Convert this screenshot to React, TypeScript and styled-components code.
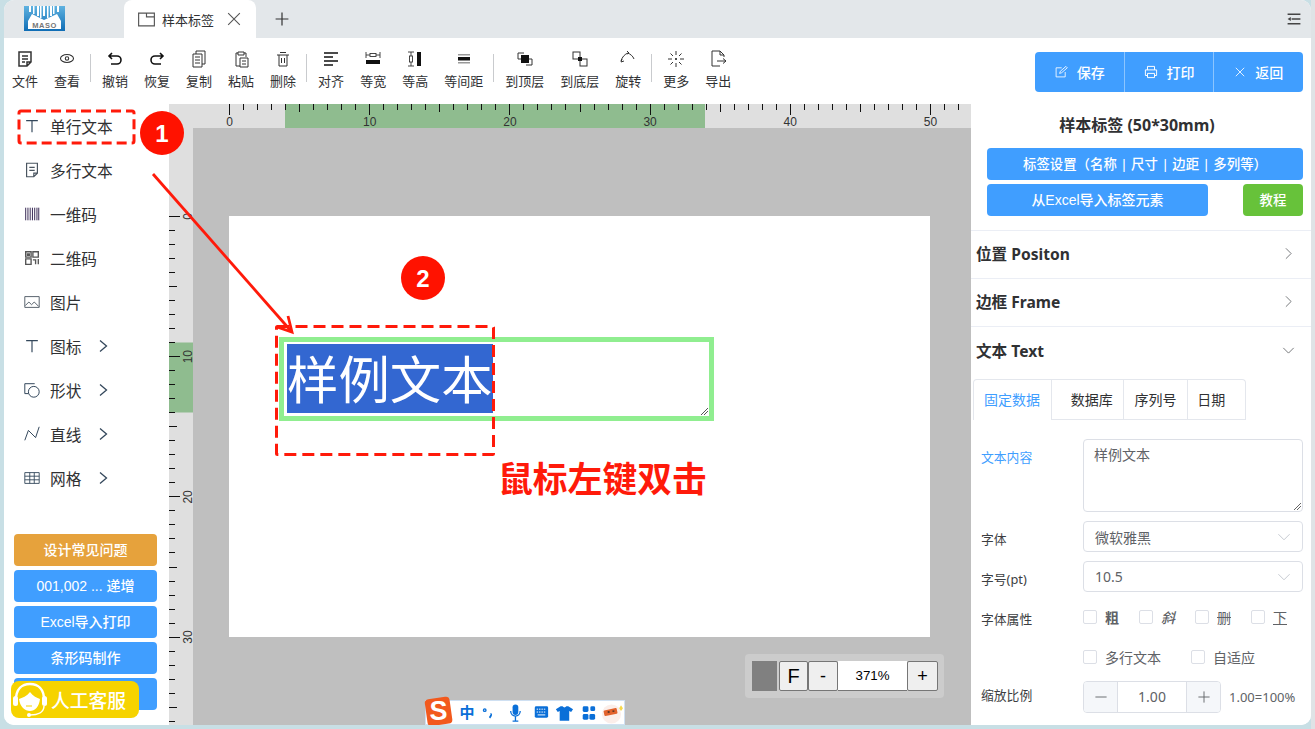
import React from "react";
import styled, { createGlobalStyle } from "styled-components";

const GlobalStyle = createGlobalStyle`
    html, body {
        margin: 0;
        padding: 0;
        overflow: hidden;
    }
    body {
        font-family: "Noto Sans", "Noto Sans CJK SC", sans-serif;
        color: #303133;
    }
    * {
        box-sizing: border-box;
    }
`;

const Page = styled.div`
    position: relative;
    width: 1315px;
    height: 729px;
    padding: 0 4px 4px 4px;
    overflow: hidden;
    background: linear-gradient(90deg, #c8dfe5 1311px, #dfe3e6 1311px);
`;
const Win = styled.div`
    display: flex;
    flex-direction: column;
    width: 1307px;
    height: 725px;
    border-radius: 10px;
    overflow: hidden;
    background: #fff;
`;

/* title bar */
const TabBar = styled.div`
    display: flex;
    align-items: flex-end;
    height: 38px;
    background: #e3e7ea;
    padding-left: 20px;
`;
const LogoBox = styled.div`
    width: 100px;
    height: 38px;
    padding-top: 6px;
`;
const Tab = styled.div`
    display: flex;
    align-items: center;
    width: 132px;
    height: 38px;
    padding-left: 12px;
    background: #fff;
    border-radius: 8px 8px 0 0;
    font-size: 13px;
    color: #303133;
`;
const TabLabel = styled.span`
    margin: 0 11px 0 5px;
`;
const AddTab = styled.div`
    display: flex;
    align-items: center;
    height: 38px;
    margin-left: 18px;
`;
const MenuButton = styled.div`
    display: flex;
    align-items: center;
    height: 38px;
    margin-left: auto;
    padding-right: 9px;
`;

/* toolbar */
const Toolbar = styled.div`
    display: flex;
    align-items: flex-start;
    height: 66px;
    padding-top: 11px;
    background: #fff;
`;
const ToolItem = styled.div`
    display: flex;
    flex-direction: column;
    align-items: center;
    padding: 0 8px;
    font-size: 13px;
    line-height: 18px;
    color: #303133;
    white-space: nowrap;
`;
const ToolIcon = styled.div`
    height: 22px;
    margin-bottom: 1px;
`;
const ToolSep = styled.div`
    width: 1px;
    height: 28px;
    margin: 5px 3px 0 2px;
    background: #c9cbce;
`;
const ButtonGroup = styled.div`
    display: flex;
    width: 268px;
    height: 40px;
    margin: 3px 8px 0 auto;
    border-radius: 4px;
    overflow: hidden;
`;
const GroupButton = styled.div`
    display: flex;
    flex: 1;
    align-items: center;
    justify-content: center;
    gap: 9px;
    background: #409eff;
    color: #fff;
    font-size: 14px;
    font-weight: 500;
    & + & {
        border-left: 1px solid #8cc5ff;
    }
`;

/* main */
const Body = styled.div`
    display: flex;
    height: 621px;
`;
const LeftPanel = styled.div`
    position: relative;
    display: flex;
    flex-direction: column;
    width: 165px;
    padding: 0 0 15px 0;
    background: #fff;
`;
const MenuItem = styled.div`
    display: flex;
    align-items: center;
    height: 44px;
    padding-left: 21px;
    font-size: 15.7px;
    color: #303133;
`;
const MenuIcon = styled.div`
    display: flex;
    justify-content: center;
    width: 18px;
    margin: 0 9px 0 -2px;
`;
const MenuArrow = styled.div`
    display: flex;
    margin-left: 18px;
`;
const SideButtons = styled.div`
    display: flex;
    flex-direction: column;
    gap: 4px;
    width: 143px;
    margin: auto 0 0 10px;
`;
const SideButton = styled.div<{ $bg?: string }>`
    height: 32px;
    line-height: 32px;
    border-radius: 4px;
    text-align: center;
    font-family: "Liberation Sans", "Noto Sans CJK SC", sans-serif;
    font-size: 14px;
    font-weight: 500;
    color: #fff;
    background: ${(p) => p.$bg || "#409eff"};
`;
const Kefu = styled.div`
    position: absolute;
    left: 7px;
    bottom: 7px;
    display: flex;
    align-items: center;
    width: 128px;
    height: 37px;
    border-radius: 8px;
    background: #f6d300;
    color: #fff;
    font-size: 18.8px;
    font-weight: 500;
`;

const Center = styled.div`
    display: flex;
    flex-direction: column;
    width: 802px;
`;
const RulerTop = styled.svg`
    display: block;
    flex: none;
`;
const CenterRow = styled.div`
    display: flex;
    flex: 1;
`;
const RulerLeft = styled.svg`
    display: block;
    flex: none;
`;
const Canvas = styled.div`
    position: relative;
    flex: 1;
    padding: 88px 0 0 36px;
    background: #bfbfbf;
`;
const Label = styled.div`
    position: relative;
    width: 701px;
    height: 421px;
    background: #fff;
`;
const TextBox = styled.div`
    position: absolute;
    left: 50px;
    top: 121px;
    width: 435px;
    height: 84px;
    padding: 2px 3px;
    border: 5px solid #90ee90;
    background: #fff;
`;
const Selected = styled.div`
    width: 206px;
    height: 69px;
    background: #3367d1;
    color: #fff;
    font-size: 51.4px;
    line-height: 71px;
    white-space: nowrap;
`;
const Resize = styled.svg`
    position: absolute;
    right: 0;
    bottom: 0;
`;
const ZoomBar = styled.div`
    position: absolute;
    right: 27px;
    bottom: 27px;
    display: flex;
    align-items: stretch;
    height: 44px;
    padding: 7px 6px 7px 7px;
    border-radius: 4px;
    background: #cccccc;
`;
const Swatch = styled.div`
    width: 25px;
    margin-right: 2px;
    background: #808080;
`;
const ZoomButton = styled.div<{ $w: number; $size: number }>`
    display: flex;
    align-items: center;
    justify-content: center;
    width: ${(p) => p.$w}px;
    border: 1px solid #767676;
    border-radius: 2px;
    background: #efefef;
    font-family: "Liberation Sans", sans-serif;
    font-size: ${(p) => p.$size}px;
    color: #000;
`;
const ZoomValue = styled.div`
    display: flex;
    align-items: center;
    justify-content: center;
    width: 69px;
    border-bottom: 1px solid #767676;
    background: #fff;
    font-family: "Liberation Sans", sans-serif;
    font-size: 13.3px;
    color: #000;
`;
const ImeBar = styled.div`
    position: absolute;
    left: 232px;
    bottom: 0;
    display: flex;
    align-items: center;
    width: 200px;
    height: 25px;
    padding-left: 29px;
    background: #fff;
    border: 1px solid #cfe0f2;
`;
const ImeLogo = styled.svg`
    position: absolute;
    left: -2px;
    top: -6px;
`;
const ImeChar = styled.span`
    width: 25px;
    font-size: 15px;
    font-weight: 700;
    color: #0a6fd8;
    text-align: center;
    line-height: 23px;
`;

/* right panel */
const RightPanel = styled.div`
    width: 340px;
    background: #fff;
    overflow: hidden;
`;
const RightHead = styled.div`
    display: flex;
    flex-direction: column;
    gap: 4px;
    height: 127px;
    padding: 0 8px 0 16px;
    border-bottom: 1px solid #ebeef5;
`;
const Title = styled.div`
    height: 40px;
    margin-right: 16px;
    text-align: center;
    font-size: 16px;
    font-weight: 700;
    line-height: 42px;
    color: #303133;
`;
const WideButton = styled.div<{ $w: number; $bg?: string; $latin?: boolean }>`
    width: ${(p) => p.$w}px;
    height: 32px;
    line-height: 32px;
    border-radius: 4px;
    text-align: center;
    color: #fff;
    font-family: ${(p) => (p.$latin ? '"Liberation Sans", "Noto Sans CJK SC", sans-serif' : "inherit")};
    font-size: ${(p) => (p.$latin ? 14 : 13.4)}px;
    font-weight: 500;
    background: ${(p) => p.$bg || "#409eff"};
`;
const ButtonRow = styled.div`
    display: flex;
    justify-content: space-between;
`;
const Fold = styled.div<{ $line?: boolean }>`
    display: flex;
    align-items: center;
    justify-content: space-between;
    height: 48px;
    padding: 0 16px 2px 5px;
    font-size: 15.6px;
    font-weight: 700;
    color: #303133;
    border-bottom: ${(p) => (p.$line ? "1px solid #ebeef5" : "none")};
`;
const Tabs = styled.div`
    display: flex;
    width: 273px;
    height: 41px;
    margin: 4px 0 0 2px;
    border: 1px solid #e4e7ed;
    border-bottom: none;
    border-radius: 4px 4px 0 0;
`;
const FormTab = styled.div<{ $w: number; $pad: number; $active?: boolean }>`
    width: ${(p) => p.$w}px;
    padding-left: ${(p) => p.$pad}px;
    line-height: 39px;
    font-size: 14px;
    color: ${(p) => (p.$active ? "#409eff" : "#303133")};
    border-bottom: ${(p) => (p.$active ? "none" : "1px solid #e4e7ed")};
    & + & {
        border-left: 1px solid #e4e7ed;
    }
`;
const Form = styled.div`
    display: flex;
    flex-direction: column;
    gap: 9px;
    padding: 19px 8px 0 10px;
`;
const FormRow = styled.div<{ $h: number; $top?: boolean }>`
    display: grid;
    grid-template-columns: 102px 220px;
    align-items: ${(p) => (p.$top ? "start" : "center")};
    height: ${(p) => p.$h}px;
`;
const FormLabel = styled.div<{ $active?: boolean; $off?: number }>`
    font-size: 12.8px;
    margin-top: ${(p) => p.$off || 0}px;
    color: ${(p) => (p.$active ? "#409eff" : "#3c3e42")};
`;
const TextArea = styled.div`
    position: relative;
    height: 73px;
    padding: 4px 10px;
    border: 1px solid #dcdfe6;
    border-radius: 4px;
    font-size: 14px;
    color: #606266;
`;
const Select = styled.div`
    display: flex;
    align-items: center;
    justify-content: space-between;
    height: 31px;
    padding: 0 11px 0 11px;
    border: 1px solid #dcdfe6;
    border-radius: 4px;
    font-size: 14px;
    color: #606266;
`;
const Checks = styled.div`
    display: flex;
`;
const Check = styled.div<{ $w: number }>`
    display: flex;
    align-items: center;
    width: ${(p) => p.$w}px;
    font-size: 14px;
    color: #606266;
`;
const Box = styled.span`
    flex: none;
    width: 14px;
    height: 14px;
    margin-right: 8px;
    border: 1px solid #dcdfe6;
    border-radius: 2px;
    background: #fff;
`;
const BoldText = styled.span`
    font-weight: 700;
`;
const ItalicText = styled.span`
    font-style: italic;
    font-weight: 500;
`;
const StrikeText = styled.span`
    text-decoration: line-through;
`;
const UnderText = styled.span`
    text-decoration: underline;
`;
const StepperRow = styled.div`
    display: flex;
    align-items: center;
    gap: 8px;
`;
const Stepper = styled.div`
    display: flex;
    width: 138px;
    height: 32px;
    border: 1px solid #dcdfe6;
    border-radius: 4px;
    overflow: hidden;
`;
const StepButton = styled.div`
    display: flex;
    align-items: center;
    justify-content: center;
    width: 33px;
    background: #f5f7fa;
`;
const StepValue = styled.div`
    flex: 1;
    border-left: 1px solid #dcdfe6;
    border-right: 1px solid #dcdfe6;
    text-align: center;
    line-height: 30px;
    font-size: 14px;
    color: #606266;
`;
const StepHint = styled.span`
    font-size: 13px;
    color: #606266;
    white-space: nowrap;
`;

/* annotations drawn on top of the screenshot */
const Notes = styled.svg`
    position: absolute;
    left: 0;
    top: 0;
    pointer-events: none;
`;
const NoteText = styled.div`
    position: absolute;
    left: 498px;
    top: 456px;
    font-size: 34.8px;
    font-weight: 700;
    line-height: 46px;
    color: #ff1a0a;
    white-space: nowrap;
`;

const S = ({ size = 20, w = 1.3, c = "#333", children }: { size?: number; w?: number; c?: string; children: React.ReactNode }) => (
    <svg width={size} height={size} viewBox="0 0 20 20" fill="none" stroke={c} strokeWidth={w} style={{ display: "block", flex: "none" }}>
        {children}
    </svg>
);

const toolIcons: Record<string, React.ReactNode> = {
    file: <S w={1.5}><path d="M4 3h12v10l-4 4H4zM16 13h-4v4M7 7h6M7 10h6M7 13h3" /></S>,
    eye: <S w={1.1}><ellipse cx="10" cy="9.500" rx="6.500" ry="4" /><circle cx="10" cy="9.500" r="1.700" /></S>,
    undo: <S w={1.600} c="#111"><path d="M7 4 4 7l3 3M4 7h8a4 4 0 0 1 0 8H6" /></S>,
    redo: <S w={1.600} c="#111"><path d="m13 4 3 3-3 3M16 7H8a4 4 0 0 0 0 8h6" /></S>,
    copy: <S w={1}><path d="M7 5V2h9v13h-3M4 5h9v13H4zM6 8h5M6 11h5M6 14h5" /></S>,
    paste: <S w={1}><path d="M7 4H5v13h4M13 4h2v4M7 3h6v3H7zM9 9h8v9H9zM11 12h4M11 15h4" /></S>,
    del: <S w={1}><path d="M4 6h12M7 3.500h6M6 6v11h8V6M8.500 9v5M11.500 9v5" /></S>,
    align: <S w={1.600} c="#111"><path d="M3 4h14M3 8h9M3 12h14M3 16h9" /></S>,
    same_w: <S w={.9}><path d="M3 3v6M17 3v6M3 6h14" /><rect x="7" y="4.500" width="6" height="3" fill="#fff" /><rect x="3" y="11" width="14" height="4" fill="#111" stroke="none" /></S>,
    same_h: <S w={.9}><path d="M3 3h6M3 17h6M6 3v14" /><rect x="4.500" y="7" width="3" height="6" fill="#fff" /><rect x="12" y="3" width="4" height="14" fill="#111" stroke="none" /></S>,
    gap: <S w={1}><rect x="4" y="5" width="12" height="1.500" fill="#999" stroke="none" /><rect x="4" y="8" width="12" height="3.500" fill="#111" stroke="none" /><rect x="4" y="13" width="12" height="1.500" fill="#999" stroke="none" /></S>,
    front: <S w={1}><path d="M9 4H3v6h3M11 16h6v-6h-3" /><rect x="6" y="6" width="8" height="8" fill="#111" stroke="none" /></S>,
    back: <S w={1}><rect x="3" y="3" width="7" height="7" fill="#fff" /><rect x="10" y="10" width="7" height="7" fill="#fff" /><rect x="8" y="8" width="4" height="4" fill="#111" stroke="none" /></S>,
    rotate: <S w={1}><path d="M3 12c1-4 4-7 7-8 2 1 5 3 6 6M9 2l2 2-2 1M4 10 3 13l3-1" /></S>,
    more: <S w={1}><path d="M10 2v4M10 14v4M2 10h4M14 10h4M4.500 4.500l2.500 2.500M15.500 4.500 13 7M4.500 15.500 7 13M15.500 15.500 13 13" /><circle cx="10" cy="10" r="1" fill="#111" stroke="none" /></S>,
    out: <S w={1}><path d="M16 8V6l-4-4H4v15h8M12 2v4h4M9 12h9M15 9.500l3 2.500-3 2.500" /></S>,
};

const tools: (string | [string, string])[] = [
    ["file", "文件"], ["eye", "查看"], "|",
    ["undo", "撤销"], ["redo", "恢复"], ["copy", "复制"], ["paste", "粘贴"], ["del", "删除"], "|",
    ["align", "对齐"], ["same_w", "等宽"], ["same_h", "等高"], ["gap", "等间距"], "|",
    ["front", "到顶层"], ["back", "到底层"], ["rotate", "旋转"], "|",
    ["more", "更多"], ["out", "导出"],
];

const menuIcons: Record<string, React.ReactNode> = {
    t: <S size={18} w={1.300} c="#33475b"><path d="M3.500 4h13M10 4v13" /></S>,
    note: <S size={18} w={1.300} c="#4a5560"><path d="M4 2.500h12v11l-4 4H4zM16 13.500h-4v4M7 7h6M7 10.500h6" /></S>,
    bar: <S size={18} w={1.100} c="#3a2a55"><path d="M3 3v14M5.500 3v14M8 3v14M10.500 3v14M13 3v14M15.500 3v14M17.500 3v14" /></S>,
    qr: <S size={18} w={1.500} c="#555"><path d="M3 3h6v6H3zM11 3h6v6h-6zM3 11h6v6H3zM11 12h3v5M17 11v6M5 5.500h2v1.500H5z" /></S>,
    img: <S size={18} w={1} c="#4a5560"><path d="M2 4h16v12H2zM2.500 14l4-4 3 3 3-3 5 5" /></S>,
    shape: <S size={18} w={1.100} c="#33475b"><path d="M13 3H2v11h4" /><circle cx="12" cy="12" r="6" /></S>,
    line: <S size={18} w={1.100} c="#33475b"><path d="M2 17 6 6l8 8 4-12" /></S>,
    grid: <S size={18} w={1} c="#33475b"><path d="M2 4h16v12H2zM2 8h16M2 12h16M7.500 4v12M12.500 4v12" /></S>,
};

const Chevron = () => (
    <svg width="9" height="14" viewBox="0 0 9 14" fill="none" stroke="#33475b" strokeWidth="1.300" style={{ display: "block" }}><path d="m1 1.500 6.500 5.500L1 12.500" /></svg>
);

const menu = [
    { icon: "t", text: "单行文本" },
    { icon: "note", text: "多行文本" },
    { icon: "bar", text: "一维码" },
    { icon: "qr", text: "二维码" },
    { icon: "img", text: "图片" },
    { icon: "t", text: "图标", arrow: true },
    { icon: "shape", text: "形状", arrow: true },
    { icon: "line", text: "直线", arrow: true },
    { icon: "grid", text: "网格", arrow: true },
];

const STEP = 14.02;

const TopRuler = () => {
    const ticks = Array.from({ length: 53 }, (_, i) => i);
    return (
        <RulerTop width="802" height="24">
            <rect width="802" height="24" fill="#dfdfdf" />
            <rect x="116" width="420" height="24" fill="#8fbc8f" />
            {ticks.map((i) => {
                const x = 60.500 + Math.round(i * STEP);
                const len = i % 10 === 0 ? 11 : i % 5 === 0 ? 8 : 6;
                return <line key={i} x1={x} x2={x} y1="0" y2={len} stroke="#111" />;
            })}
            {[0, 10, 20, 30, 40, 50].map((n) => (
                <text key={n} x={60.500 + n * STEP} y="22" textAnchor="middle" fontSize="12" fontFamily="Liberation Sans" fill="#333">{n}</text>
            ))}
        </RulerTop>
    );
};

const SideRuler = () => {
    const ticks = Array.from({ length: 37 }, (_, i) => i);
    return (
        <RulerLeft width="24" height="597">
            <rect width="24" height="597" fill="#dfdfdf" />
            <rect y="214.500" width="24" height="70" fill="#8fbc8f" />
            {ticks.map((i) => {
                const y = 88.500 + Math.round(i * STEP);
                const len = i % 10 === 0 ? 11 : i % 5 === 0 ? 8 : 6;
                return <line key={i} y1={y} y2={y} x1="0" x2={len} stroke="#111" />;
            })}
            {[0, 10, 20, 30].map((n) => (
                <text key={n} transform={`translate(22.500 ${88.500 + n * STEP}) rotate(-90)`} textAnchor="middle" fontSize="12" fontFamily="Liberation Sans" fill="#333">{n}</text>
            ))}
        </RulerLeft>
    );
};

const Logo = () => (
    <svg width="41" height="25" viewBox="0 0 41 25" style={{ display: "block" }}>
        <defs>
            <linearGradient id="mb" x1="0" x2="0" y1="0" y2="1">
                <stop offset="0" stopColor="#5fb2e0" />
                <stop offset="1" stopColor="#0f6db5" />
            </linearGradient>
        </defs>
        <rect width="41" height="25" fill="url(#mb)" />
        {[5, 9, 13, 16, 19, 23, 26, 29, 33].map((x, i) => (
            <rect key={x} x={x} y="0" width={i % 2 ? 1.500 : 2} height={i === 4 ? 10 : 14 - Math.abs(i - 4) * 2} fill="#fff" />
        ))}
        <path d="M4 15 8 8 20 14 33 8 37 15V23H4Z" fill="#fff" />
        <text x="20.500" y="22" textAnchor="middle" fontSize="7.500" fontWeight="700" fontFamily="Liberation Sans" letterSpacing=".5" fill="#777">MASO</text>
    </svg>
);

const Headset = () => (
    <svg width="40" height="37" viewBox="0 0 40 37" fill="none" stroke="#fff" style={{ flex: "none" }}>
        <path d="M5 19C5 8 11 3 19 3s14 5 14 16" strokeWidth="2.500" />
        <path d="M8 18c3-1 8-3 11-7 3 4 7 6 10 7-1 8-5 12-10 12S9 26 8 18Z" fill="#fff" stroke="none" />
        <rect x="2" y="15" width="5" height="10" rx="2.500" fill="#fff" stroke="none" />
        <rect x="31" y="15" width="5" height="10" rx="2.500" fill="#fff" stroke="none" />
        <path d="M33 25c0 6-6 9-14 9" strokeWidth="1.500" />
        <circle cx="18" cy="34" r="2" fill="#fff" stroke="none" />
        <path d="M15 25h6" stroke="#f6d300" strokeWidth="1.200" />
    </svg>
);

const ImeIcons = () => (
    <>
        <svg width="24" height="20" viewBox="0 0 24 20" fill="#0a6fd8" stroke="#0a6fd8" strokeWidth="1.500">
            <circle cx="6" cy="7" r="1.300" fill="none" />
            <path d="M12 11c1 0 1 2-1 4" strokeWidth="2" fill="none" />
        </svg>
        <svg width="25" height="20" viewBox="0 0 25 20" fill="#0a6fd8" style={{ marginLeft: 2 }}>
            <rect x="9" y="1" width="6" height="11" rx="3" />
            <path d="M7 8c0 7 10 7 10 0M12 13v5M9 18.500h6" fill="none" stroke="#0a6fd8" strokeWidth="1.400" />
        </svg>
        <svg width="25" height="20" viewBox="0 0 25 20" style={{ marginLeft: 2 }}>
            <rect x="5" y="3" width="14" height="12" rx="1.500" fill="#0a6fd8" />
            <path d="M7 6h10M7 9h10" stroke="#fff" strokeDasharray="1.500 1" />
            <path d="M8 12h8" stroke="#fff" />
        </svg>
        <svg width="25" height="20" viewBox="0 0 25 20" fill="#0a6fd8">
            <path d="M8 3h2c1 1.500 3 1.500 4 0h2l5 3-2 3-2-1v10H7V8L5 9 3 6Z" />
        </svg>
        <svg width="25" height="20" viewBox="0 0 25 20" fill="#0a6fd8">
            <rect x="6" y="3" width="6" height="6" rx="1.500" />
            <rect x="14" y="3" width="5" height="5" rx="1.500" />
            <rect x="6" y="11" width="6" height="6" rx="1.500" />
            <rect x="13" y="11" width="6" height="6" rx="1.500" />
        </svg>
        <svg width="24" height="24" viewBox="0 0 24 24">
            <circle cx="11" cy="13" r="10" fill="#fbeeea" />
            <rect x="3" y="8" width="14" height="6" rx="1" transform="rotate(-12 10 11)" fill="#e2622c" />
            <path d="M7 11h2M12 10h2" stroke="#3a2a20" strokeWidth="1.500" />
            <path d="M21 4 23 7 21 10 19 7Z" fill="#f6d84a" />
        </svg>
    </>
);

export default function App() {
    return (
        <Page>
            <GlobalStyle />
            <Win>
                <TabBar>
                    <LogoBox><Logo /></LogoBox>
                    <Tab>
                        <S size={21} w={1.100} c="#555"><path d="M2.500 4h15v12h-15zM10 4v3.500h7.500" /></S>
                        <TabLabel>样本标签</TabLabel>
                        <S size={18} w={1.200} c="#555"><path d="m3.500 3.500 13 13M16.500 3.500l-13 13" /></S>
                    </Tab>
                    <AddTab><S size={16} w={1.500} c="#333"><path d="M10 2v16M2 10h16" /></S></AddTab>
                    <MenuButton>
                        <S size={16} w={2} c="#444"><path d="M2 4h16M7 10h11M2 16h16" /><path d="M6 7.500 2 10l4 2.500Z" fill="#444" stroke="none" /></S>
                    </MenuButton>
                </TabBar>
                <Toolbar>
                    {tools.map((t, i) =>
                        t === "|" ? (
                            <ToolSep key={i} />
                        ) : (
                            <ToolItem key={i}>
                                <ToolIcon>{toolIcons[t[0]]}</ToolIcon>
                                {t[1]}
                            </ToolItem>
                        )
                    )}
                    <ButtonGroup>
                        <GroupButton>
                            <S size={14} c="#fff" w={1.200}><path d="M16 10v7H3V4h8M8 12l1-3 8-7 2 2-8 7Z" /></S>
                            保存
                        </GroupButton>
                        <GroupButton>
                            <S size={14} c="#fff" w={1.400}><path d="M5 7V2h10v5M5 15H2V7h16v8h-3M5 12h10v6H5z" /></S>
                            打印
                        </GroupButton>
                        <GroupButton>
                            <S size={12} c="#fff" w={1.400}><path d="m3 3 14 14M17 3 3 17" /></S>
                            返回
                        </GroupButton>
                    </ButtonGroup>
                </Toolbar>
                <Body>
                    <LeftPanel>
                        {menu.map((m) => (
                            <MenuItem key={m.text}>
                                <MenuIcon>{menuIcons[m.icon]}</MenuIcon>
                                {m.text}
                                {m.arrow && <MenuArrow><Chevron /></MenuArrow>}
                            </MenuItem>
                        ))}
                        <SideButtons>
                            <SideButton $bg="#e6a23c">设计常见问题</SideButton>
                            <SideButton>001,002 ... 递增</SideButton>
                            <SideButton>Excel导入打印</SideButton>
                            <SideButton>条形码制作</SideButton>
                            <SideButton />
                        </SideButtons>
                        <Kefu><Headset />人工客服</Kefu>
                    </LeftPanel>
                    <Center>
                        <TopRuler />
                        <CenterRow>
                            <SideRuler />
                            <Canvas>
                                <Label>
                                    <TextBox>
                                        <Selected>样例文本</Selected>
                                        <Resize width="9" height="9" viewBox="0 0 9 9" stroke="#555"><path d="M1 8 8 1M4 8l4-4" /></Resize>
                                    </TextBox>
                                </Label>
                                <ZoomBar>
                                    <Swatch />
                                    <ZoomButton $w={29} $size={20}>F</ZoomButton>
                                    <ZoomButton $w={30} $size={18}>-</ZoomButton>
                                    <ZoomValue>371%</ZoomValue>
                                    <ZoomButton $w={31} $size={18}>+</ZoomButton>
                                </ZoomBar>
                                <ImeBar>
                                    <ImeLogo width="30" height="32" viewBox="0 0 30 32">
                                        <rect x="2" y="3" width="25" height="27" rx="4" transform="rotate(-8 14 16)" fill="#f2591d" />
                                        <text x="14.500" y="25" textAnchor="middle" fontFamily="Liberation Sans" fontWeight="700" fontSize="27" fill="#fff">S</text>
                                    </ImeLogo>
                                    <ImeChar>中</ImeChar>
                                    <ImeIcons />
                                </ImeBar>
                            </Canvas>
                        </CenterRow>
                    </Center>
                    <RightPanel>
                        <RightHead>
                            <Title>样本标签 (50*30mm)</Title>
                            <WideButton $w={316}>标签设置（名称 | 尺寸 | 边距 | 多列等）</WideButton>
                            <ButtonRow>
                                <WideButton $w={221} $latin>从Excel导入标签元素</WideButton>
                                <WideButton $w={60} $bg="#67c23a">教程</WideButton>
                            </ButtonRow>
                        </RightHead>
                        <Fold $line>位置 Positon<S size={13} c="#606266" w={1.300}><path d="m6 2 8 8-8 8" /></S></Fold>
                        <Fold $line>边框 Frame<S size={13} c="#606266" w={1.300}><path d="m6 2 8 8-8 8" /></S></Fold>
                        <Fold>文本 Text<S size={13} c="#606266" w={1.300}><path d="m2 6 8 8 8-8" /></S></Fold>
                        <Tabs>
                            <FormTab $w={77} $pad={10} $active>固定数据</FormTab>
                            <FormTab $w={73} $pad={19}>数据库</FormTab>
                            <FormTab $w={64} $pad={10}>序列号</FormTab>
                            <FormTab $w={58} $pad={9}>日期</FormTab>
                        </Tabs>
                        <Form>
                            <FormRow $h={73} $top>
                                <FormLabel $active $off={8}>文本内容</FormLabel>
                                <TextArea>
                                    样例文本
                                    <Resize width="9" height="9" viewBox="0 0 9 9" stroke="#666"><path d="M1 8 8 1M4 8l4-4" /></Resize>
                                </TextArea>
                            </FormRow>
                            <FormRow $h={31}>
                                <FormLabel $off={3}>字体</FormLabel>
                                <Select>微软雅黑<S size={14} c="#c0c4cc" w={1.300}><path d="m2 6 8 8 8-8" /></S></Select>
                            </FormRow>
                            <FormRow $h={31}>
                                <FormLabel $off={3}>字号(pt)</FormLabel>
                                <Select>10.5<S size={14} c="#c0c4cc" w={1.300}><path d="m2 6 8 8 8-8" /></S></Select>
                            </FormRow>
                            <FormRow $h={31}>
                                <FormLabel $off={3}>字体属性</FormLabel>
                                <Checks>
                                    <Check $w={56}><Box /><BoldText>粗</BoldText></Check>
                                    <Check $w={56}><Box /><ItalicText>斜</ItalicText></Check>
                                    <Check $w={56}><Box /><StrikeText>删</StrikeText></Check>
                                    <Check $w={52}><Box /><UnderText>下</UnderText></Check>
                                </Checks>
                            </FormRow>
                            <FormRow $h={31}>
                                <div />
                                <Checks>
                                    <Check $w={108}><Box />多行文本</Check>
                                    <Check $w={100}><Box />自适应</Check>
                                </Checks>
                            </FormRow>
                            <FormRow $h={32}>
                                <FormLabel $off={-6}>缩放比例</FormLabel>
                                <StepperRow>
                                    <Stepper>
                                        <StepButton><S size={14} c="#606266" w={1.300}><path d="M2 10h16" /></S></StepButton>
                                        <StepValue>1.00</StepValue>
                                        <StepButton><S size={14} c="#606266" w={1.300}><path d="M2 10h16M10 2v16" /></S></StepButton>
                                    </Stepper>
                                    <StepHint>1.00=100%</StepHint>
                                </StepperRow>
                            </FormRow>
                        </Form>
                    </RightPanel>
                </Body>
            </Win>

            <Notes width="1315" height="729" fill="none">
                <rect x="19" y="111" width="115" height="32" rx="2" stroke="#ff1a0a" strokeWidth="3" strokeDasharray="10 5" />
                <rect x="276.500" y="326.500" width="217" height="128" rx="1" stroke="#ff1a0a" strokeWidth="3" strokeDasharray="12 6" />
                <path d="M153 174 291 331" stroke="#ff1a0a" strokeWidth="2.800" />
                <path d="M277 327 292 332 288 316" stroke="#ff1a0a" strokeWidth="2.800" />
                <circle cx="162" cy="133" r="22" fill="#ff1200" />
                <circle cx="423" cy="278" r="22" fill="#ff1200" />
                <text x="162" y="142" textAnchor="middle" fontFamily="Liberation Sans" fontWeight="700" fontSize="24" fill="#fff">1</text>
                <text x="423" y="287" textAnchor="middle" fontFamily="Liberation Sans" fontWeight="700" fontSize="24" fill="#fff">2</text>
            </Notes>
            <NoteText>鼠标左键双击</NoteText>
        </Page>
    );
}
